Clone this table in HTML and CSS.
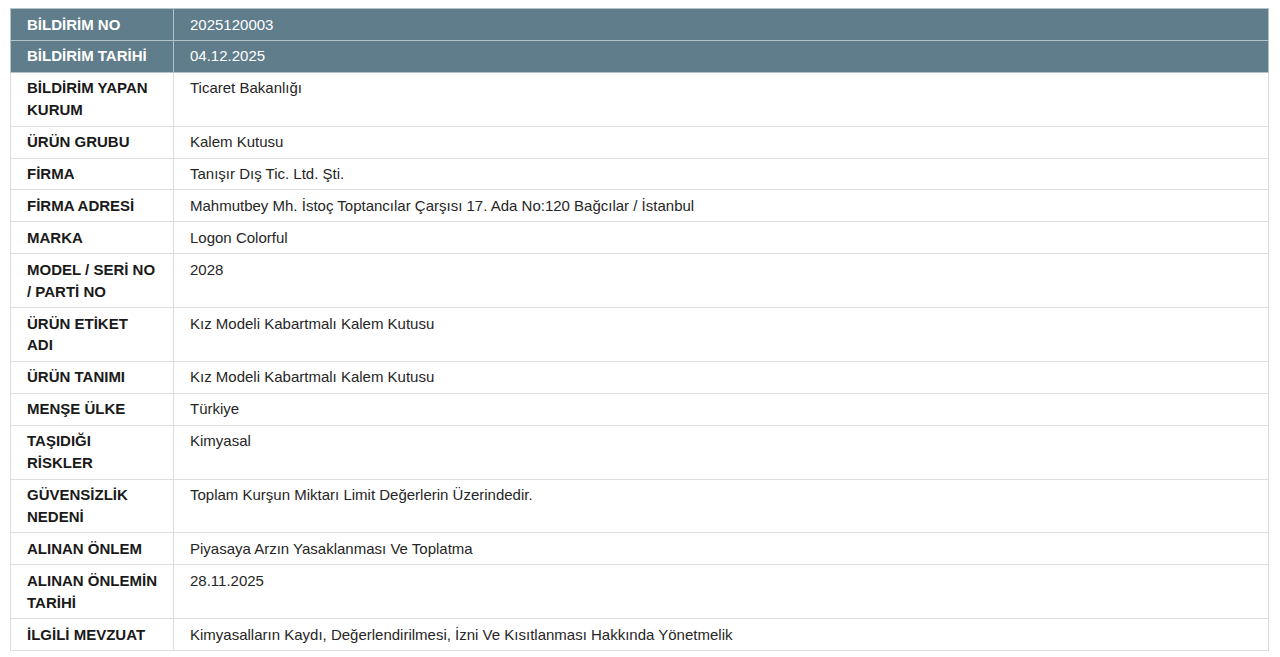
FILE: index.html
```html
<!DOCTYPE html>
<html lang="tr">
<head>
<meta charset="utf-8">
<link rel="stylesheet" href="styles.css">
</head>
<body>
<table class="info">
  <tbody>
    <tr class="head"><th>BİLDİRİM NO</th><td>2025120003</td></tr>
    <tr class="head"><th>BİLDİRİM TARİHİ</th><td>04.12.2025</td></tr>
    <tr><th>BİLDİRİM YAPAN KURUM</th><td>Ticaret Bakanlığı</td></tr>
    <tr><th>ÜRÜN GRUBU</th><td>Kalem Kutusu</td></tr>
    <tr><th>FİRMA</th><td>Tanışır Dış Tic. Ltd. Şti.</td></tr>
    <tr><th>FİRMA ADRESİ</th><td>Mahmutbey Mh. İstoç Toptancılar Çarşısı 17. Ada No:120 Bağcılar / İstanbul</td></tr>
    <tr><th>MARKA</th><td>Logon Colorful</td></tr>
    <tr><th>MODEL / SERİ NO / PARTİ NO</th><td>2028</td></tr>
    <tr><th>ÜRÜN ETİKET ADI</th><td>Kız Modeli Kabartmalı Kalem Kutusu</td></tr>
    <tr><th>ÜRÜN TANIMI</th><td>Kız Modeli Kabartmalı Kalem Kutusu</td></tr>
    <tr><th>MENŞE ÜLKE</th><td>Türkiye</td></tr>
    <tr><th>TAŞIDIĞI RİSKLER</th><td>Kimyasal</td></tr>
    <tr><th>GÜVENSİZLİK NEDENİ</th><td>Toplam Kurşun Miktarı Limit Değerlerin Üzerindedir.</td></tr>
    <tr><th>ALINAN ÖNLEM</th><td>Piyasaya Arzın Yasaklanması Ve Toplatma</td></tr>
    <tr><th>ALINAN ÖNLEMİN TARİHİ</th><td>28.11.2025</td></tr>
    <tr><th>İLGİLİ MEVZUAT</th><td>Kimyasalların Kaydı, Değerlendirilmesi, İzni Ve Kısıtlanması Hakkında Yönetmelik</td></tr>
  </tbody>
</table>
</body>
</html>
```

FILE: styles.css
```css
html, body {
  margin: 0;
  padding: 0;
  background: #ffffff;
}
body {
  padding: 8px 11px 0 10px;
  font-family: "Liberation Sans", Arial, sans-serif;
  font-size: 15px;
  color: #222222;
}
.info {
  width: 100%;
  border-collapse: collapse;
  border: 1px solid #dcdcdc;
  table-layout: fixed;
}
.info th,
.info td {
  border: 1px solid #dedede;
  padding: 4.5px 16px 4.5px 16px;
  line-height: 21.9px;
  vertical-align: top;
  text-align: left;
}
.info th {
  width: 130px;
  font-weight: bold;
  color: #1a1a1a;
}
.info td {
  color: #262626;
}
.info .head th,
.info .head td {
  background: #607d8b;
  color: #ffffff;
  border-color: #b4c3ca;
}
```
